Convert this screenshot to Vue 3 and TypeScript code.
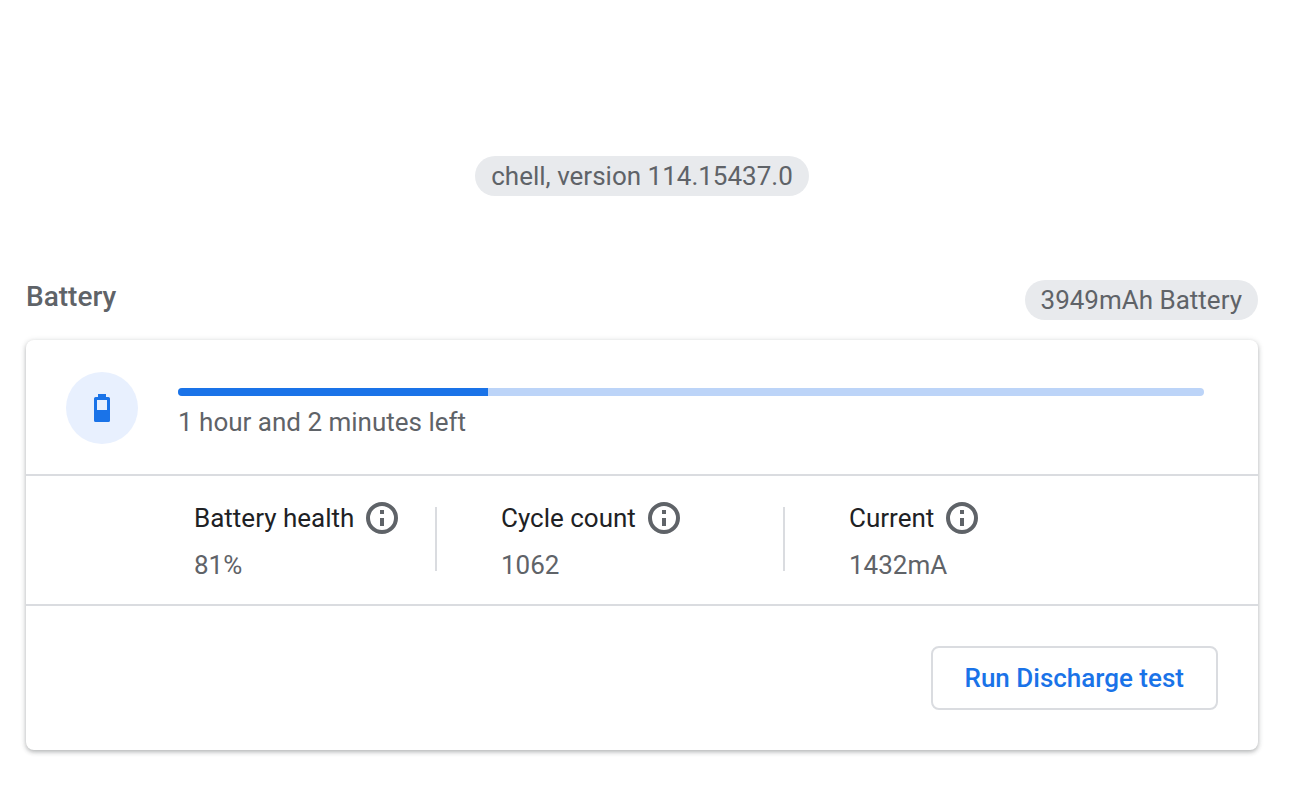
<script setup lang="ts">
interface Stat {
  id: string
  label: string
  value: string
}

const version = 'chell, version 114.15437.0'
const capacity = '3949mAh Battery'
const remaining = '1 hour and 2 minutes left'
const charge = 30.2

const stats: Stat[] = [
  { id: 'health', label: 'Battery health', value: '81%' },
  { id: 'cycles', label: 'Cycle count', value: '1062' },
  { id: 'current', label: 'Current', value: '1432mA' },
]
</script>

<template>
  <main class="page">
    <div class="version"><span class="chip">{{ version }}</span></div>

    <header class="heading">
      <h1 class="title">Battery</h1>
      <span class="chip">{{ capacity }}</span>
    </header>

    <section class="card">
      <div class="charge">
        <div class="badge">
          <svg width="16" height="28" viewBox="0 0 16 28" aria-hidden="true">
            <path
              fill="#1a73e8"
              fill-rule="evenodd"
              d="M4 0h8v3h2.4A1.6 1.6 0 0 1 16 4.600V26.400A1.600 1.600 0 0 1 14.400 28H1.600A1.600 1.600 0 0 1 0 26.400V4.600A1.600 1.600 0 0 1 1.600 3H4zM3 6v10h10V6z"
            />
          </svg>
        </div>
        <div class="level">
          <div
            class="track"
            role="progressbar"
            aria-label="Battery charge"
            :aria-valuenow="charge"
            aria-valuemin="0"
            aria-valuemax="100"
          >
            <div class="fill" :style="{ width: charge + '%' }"></div>
          </div>
          <p class="remaining">{{ remaining }}</p>
        </div>
      </div>

      <dl class="stats">
        <div v-for="stat in stats" :key="stat.id" class="stat">
          <dt class="label">
            {{ stat.label }}
            <button type="button" class="info" :aria-label="'About ' + stat.label">
              <svg width="32" height="32" viewBox="0 0 32 32" aria-hidden="true">
                <circle cx="16" cy="16" r="14" fill="none" stroke="#5f6368" stroke-width="4" />
                <path fill="#5f6368" d="M14 8h4v4h-4zM14 16h4v8h-4z" />
              </svg>
            </button>
          </dt>
          <dd class="value">{{ stat.value }}</dd>
        </div>
      </dl>

      <footer class="actions">
        <button type="button" class="run">Run Discharge test</button>
      </footer>
    </section>
  </main>
</template>

<style>
body {
  margin: 0;
  background: #fff;
}
</style>

<style scoped>
.page {
  box-sizing: border-box;
  padding: 156px 48px 48px 26px;
  font-family: Roboto, "Liberation Sans", sans-serif;
  font-size: 26px;
  line-height: 40px;
  color: #5f6368;
}

.version {
  display: flex;
  justify-content: center;
}

.chip {
  padding: 0 16px;
  border-radius: 20px;
  background: #e8eaed;
  white-space: nowrap;
}

.heading {
  display: flex;
  justify-content: space-between;
  align-items: flex-start;
  margin: 84px 0 20px;
}

.title {
  margin: 0;
  font-size: 28px;
  font-weight: 500;
  line-height: 34px;
}

.card {
  border-radius: 8px;
  background: #fff;
  box-shadow: 0 2px 4px rgba(60, 64, 67, 0.3), 0 1px 6px rgba(60, 64, 67, 0.15);
}

.charge {
  display: flex;
  gap: 40px;
  padding: 32px 54px 30px 40px;
}

.badge {
  display: flex;
  flex: none;
  align-items: center;
  justify-content: center;
  width: 72px;
  height: 72px;
  border-radius: 50%;
  background: #e8f0fe;
}

.level {
  flex: 1;
  padding-top: 16px;
}

.track {
  height: 8px;
  border-radius: 4px;
  overflow: hidden;
  background: #bcd4f8;
}

.fill {
  height: 100%;
  background: #1a73e8;
}

.remaining {
  margin: 6px 0 0;
}

.stats {
  display: grid;
  grid-template-columns: 243fr 348fr 473fr;
  margin: 0;
  padding: 31px 0 33px 168px;
  border-top: 2px solid #dadce0;
  border-bottom: 2px solid #dadce0;
}

.stat {
  height: 64px;
  border-right: 2px solid #dadce0;
}

.stat:last-child {
  border-right: 0;
}

.stat + .stat {
  padding-left: 64px;
}

.label {
  display: flex;
  align-items: center;
  gap: 12px;
  height: 22px;
  color: #202124;
  white-space: nowrap;
}

.info {
  display: flex;
  padding: 0;
  border: 0;
  background: none;
  cursor: pointer;
}

.value {
  margin: 16px 0 0;
}

.actions {
  display: flex;
  justify-content: flex-end;
  padding: 40px;
}

.run {
  height: 64px;
  padding: 0 32px;
  border: 2px solid #dadce0;
  border-radius: 8px;
  background: #fff;
  color: #1a73e8;
  font: 500 26px Roboto, "Liberation Sans", sans-serif;
  cursor: pointer;
}
</style>
